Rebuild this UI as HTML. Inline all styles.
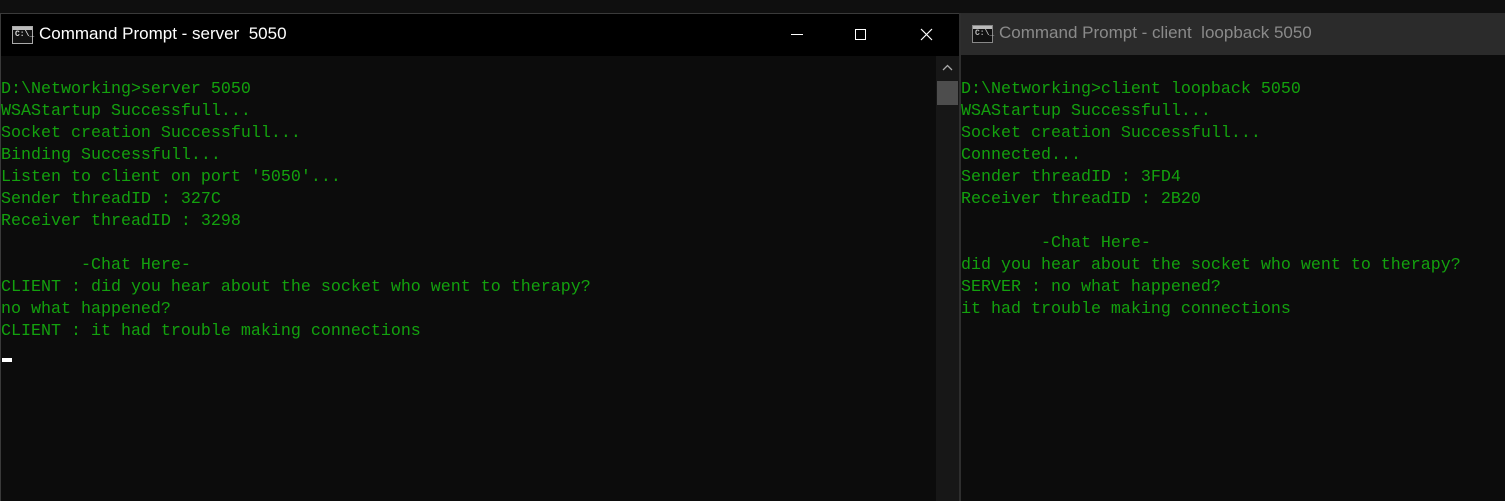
<!DOCTYPE html>
<html><head><meta charset="utf-8"><style>
*{margin:0;padding:0;box-sizing:border-box}
body{width:1505px;height:501px;background:#0f0f0f;position:relative;overflow:hidden;font-family:"Liberation Sans",sans-serif}
.win{position:absolute;top:13px;bottom:0;background:#0c0c0c}
.tb{position:absolute;left:0;right:0;top:0;height:42px}
.title{position:absolute;top:10px;font-size:17px;white-space:pre}
.icon{position:absolute;left:11px;top:12px;width:21px;height:18px;border:1px solid #aaa;background:#111}
.icon:before{content:"";position:absolute;left:0;right:0;top:0;height:3px;background:#bbb}
.icon span{position:absolute;left:2px;top:3px;font:bold 8px "Liberation Mono",monospace;color:#ddd}
pre{position:absolute;top:65px;font-family:"Liberation Mono",monospace;font-size:16.67px;line-height:22px;color:#13a10e}
</style></head><body>
<div class="win" style="left:0;width:959px;border-left:1px solid #3a3a3a;border-top:1px solid #3a3a3a">
 <div class="tb" style="background:#000">
  <div class="icon"><span>C:\_</span></div>
  <div class="title" style="left:38px;color:#fff">Command Prompt - server  5050</div>
  <div style="position:absolute;left:790px;top:20px;width:12px;height:1px;background:#fff"></div>
  <div style="position:absolute;left:854px;top:15px;width:11px;height:11px;border:1px solid #fff"></div>
  <svg style="position:absolute;left:919px;top:14px" width="13" height="13"><path d="M1 1L12 12M12 1L1 12" stroke="#fff" stroke-width="1.2"/></svg>
 </div>
 <div style="position:absolute;left:935px;top:42px;width:23px;bottom:0;background:#171717">
  <svg style="position:absolute;left:6px;top:8px" width="11" height="7"><path d="M1 6L5.5 1.5L10 6" stroke="#aaa" fill="none" stroke-width="1.3"/></svg>
  <div style="position:absolute;left:1px;top:25px;width:21px;height:24px;background:#4d4d4d"></div>
 </div>
 <pre style="left:0">D:\Networking&gt;server 5050
WSAStartup Successfull...
Socket creation Successfull...
Binding Successfull...
Listen to client on port '5050'...
Sender threadID : 327C
Receiver threadID : 3298

        -Chat Here-
CLIENT : did you hear about the socket who went to therapy?
no what happened?
CLIENT : it had trouble making connections</pre>
 <div style="position:absolute;left:1px;top:344px;width:10px;height:4px;background:#fff"></div>
</div>
<div style="position:absolute;left:959px;top:13px;width:2px;bottom:0;background:#2e2e2e"></div>
<div class="win" style="left:961px;right:0">
 <div class="tb" style="background:#2b2b2b">
  <div class="icon" style="left:11px;border-color:#888"><span style="color:#bbb">C:\_</span></div>
  <div class="title" style="left:38px;color:#8a8a8a">Command Prompt - client  loopback 5050</div>
 </div>
 <pre style="left:0;top:66px">D:\Networking&gt;client loopback 5050
WSAStartup Successfull...
Socket creation Successfull...
Connected...
Sender threadID : 3FD4
Receiver threadID : 2B20

        -Chat Here-
did you hear about the socket who went to therapy?
SERVER : no what happened?
it had trouble making connections</pre>
</div>
</body></html>
